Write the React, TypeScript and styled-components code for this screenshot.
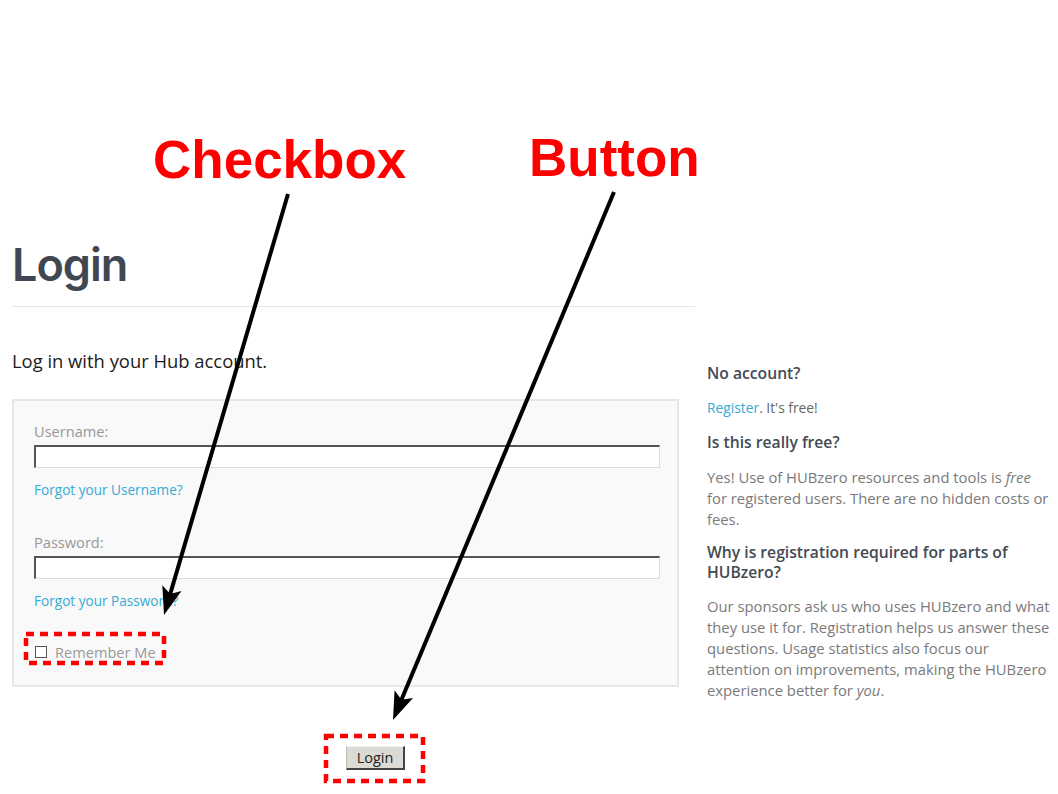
import React from "react";
import styled, { createGlobalStyle } from "styled-components";

const GlobalStyle = createGlobalStyle`
  html, body { margin: 0; padding: 0; background: #fff; }
  body { font-family: "Open Sans", "Noto Sans", sans-serif; }
  * { box-sizing: border-box; }
`;

const Page = styled.div`
  position: relative;
  width: 1058px;
  height: 794px;
  overflow: hidden;
  display: grid;
  grid-template-columns: 683px 346px;
  column-gap: 12px;
  align-items: start;
  padding: 237px 0 0 12px;
`;

const Main = styled.div`
  display: flex;
  flex-direction: column;
`;

const Title = styled.h1`
  margin: 0;
  font-family: "Inter", "Open Sans", sans-serif;
  font-size: 45px;
  line-height: 56px;
  font-weight: 600;
  color: #404652;
  letter-spacing: -1px;
`;

const Rule = styled.hr`
  margin: 13px 0 0;
  border: 0;
  border-top: 1px solid #e4e5ea;
  height: 0;
`;

const Lead = styled.h2`
  margin: 42px 0 0;
  font-size: 18.4px;
  line-height: 24px;
  font-weight: 500;
  color: #1c1c1c;
`;

const FormBox = styled.fieldset`
  margin: 26px 16px 0 0;
  border: 2px solid #e6e6e6;
  background: #f9f9f9;
  padding: 20px 17px 23px 20px;
  display: flex;
  flex-direction: column;
  min-width: 0;
`;

const FieldLabel = styled.label`
  font-size: 14.6px;
  line-height: 20px;
  color: #979797;
`;

const TextInput = styled.input`
  margin-top: 4px;
  height: 23px;
  width: 100%;
  background: #fff;
  border-style: solid;
  border-width: 2px 1px 1px 2px;
  border-color: #555 #dcdcdc #dcdcdc #555;
  padding: 0 4px;
  font: inherit;
`;

const HelpLink = styled.a<{ $gapAfter: number }>`
  margin-top: 13px;
  margin-bottom: ${(p) => p.$gapAfter}px;
  font-size: 13.6px;
  line-height: 18px;
  color: #35abd6;
  text-decoration: none;
  align-self: flex-start;
`;

const RememberRow = styled.label`
  display: flex;
  align-items: center;
  gap: 8px;
  padding-left: 1px;
  font-size: 14.6px;
  line-height: 20px;
  color: #999;
`;

const CheckBox = styled.span`
  width: 12px;
  height: 12px;
  border: 1px solid #555;
  background: #fff;
  display: inline-block;
`;

const Actions = styled.div`
  margin-top: 59px;
  padding-left: 334px;
  display: flex;
`;

const SubmitButton = styled.button`
  width: 59px;
  height: 24px;
  padding: 0;
  background: #dcdad5;
  border-style: solid;
  border-width: 1px 2px 2px 1px;
  border-color: #f4f3f0 #444 #444 #bdbbb6;
  font-family: "Open Sans", sans-serif;
  font-size: 14.5px;
  color: #222;
`;

const Aside = styled.aside`
  padding-top: 126px;
  display: flex;
  flex-direction: column;
`;

const AsideHeading = styled.h3<{ $top: number }>`
  margin: ${(p) => p.$top}px 0 0;
  font-size: 15.7px;
  line-height: 20px;
  font-weight: 600;
  color: #434a55;
`;

const AsideText = styled.p<{ $top: number }>`
  margin: ${(p) => p.$top}px 0 0;
  font-size: 14.8px;
  line-height: 20.8px;
  color: #7a7a7a;
`;

const AsideLead = styled.p`
  margin: 16px 0 0;
  font-size: 13.8px;
  line-height: 18px;
  color: #666;
`;

const Link = styled.a`
  color: #35abd6;
  text-decoration: none;
`;

const Callout = styled.div<{ $x: number; $y: number }>`
  position: absolute;
  left: ${(p) => p.$x}px;
  top: ${(p) => p.$y}px;
  font-family: "Liberation Sans", Arial, sans-serif;
  font-weight: 700;
  font-size: 53px;
  line-height: 60px;
  color: #ff0000;
  white-space: nowrap;
`;

const Overlay = styled.svg`
  position: absolute;
  left: 0;
  top: 0;
  pointer-events: none;
`;

function Arrow({ x1, y1, x2, y2 }: { x1: number; y1: number; x2: number; y2: number }) {
  const dx = x2 - x1;
  const dy = y2 - y1;
  const len = Math.hypot(dx, dy);
  const ux = dx / len;
  const uy = dy / len;
  const headLen = 28;
  const headW = 10;
  const bx = x2 - ux * headLen;
  const by = y2 - uy * headLen;
  const px = -uy;
  const py = ux;
  const pts = `${x2},${y2} ${bx + px * headW},${by + py * headW} ${bx + ux * 6},${by + uy * 6} ${bx - px * headW},${by - py * headW}`;
  return (
    <g>
      <line x1={x1} y1={y1} x2={bx + ux * 8} y2={by + uy * 8} stroke="#000" strokeWidth={4} />
      <polygon points={pts} fill="#000" />
    </g>
  );
}

export default function App() {
  return (
    <>
      <GlobalStyle />
      <Page>
        <Main>
          <Title>Login</Title>
          <Rule />
          <Lead>Log in with your Hub account.</Lead>
          <FormBox>
            <FieldLabel htmlFor="username">Username:</FieldLabel>
            <TextInput id="username" type="text" />
            <HelpLink href="#" $gapAfter={33}>Forgot your Username?</HelpLink>
            <FieldLabel htmlFor="password">Password:</FieldLabel>
            <TextInput id="password" type="password" />
            <HelpLink href="#" $gapAfter={32}>Forgot your Password?</HelpLink>
            <RememberRow>
              <CheckBox />
              Remember Me
            </RememberRow>
          </FormBox>
          <Actions>
            <SubmitButton type="button">Login</SubmitButton>
          </Actions>
        </Main>
        <Aside>
          <AsideHeading $top={0}>No account?</AsideHeading>
          <AsideLead>
            <Link href="#">Register</Link>. It's free!
          </AsideLead>
          <AsideHeading $top={15}>Is this really free?</AsideHeading>
          <AsideText $top={15}>
            Yes! Use of HUBzero resources and tools is <em>free</em> for registered users. There are no hidden costs or fees.
          </AsideText>
          <AsideHeading $top={13}>Why is registration required for parts of HUBzero?</AsideHeading>
          <AsideText $top={14}>
            Our sponsors ask us who uses HUBzero and what they use it for. Registration helps us answer these questions. Usage statistics also focus our attention on improvements, making the HUBzero experience better for <em>you</em>.
          </AsideText>
        </Aside>

        <Callout $x={153} $y={130}>Checkbox</Callout>
        <Callout $x={529} $y={128}>Button</Callout>
        <Overlay width={1058} height={794} viewBox="0 0 1058 794">
          <Arrow x1={288} y1={194} x2={164} y2={615} />
          <Arrow x1={614} y1={192} x2={393} y2={720} />
          <rect x={26} y={634} width={138} height={29} fill="none" stroke="#ff0000" strokeWidth={4.5} strokeDasharray="8 6" />
          <rect x={326} y={736} width={97} height={45} fill="none" stroke="#ff0000" strokeWidth={4.5} strokeDasharray="8 6" />
        </Overlay>
      </Page>
    </>
  );
}
